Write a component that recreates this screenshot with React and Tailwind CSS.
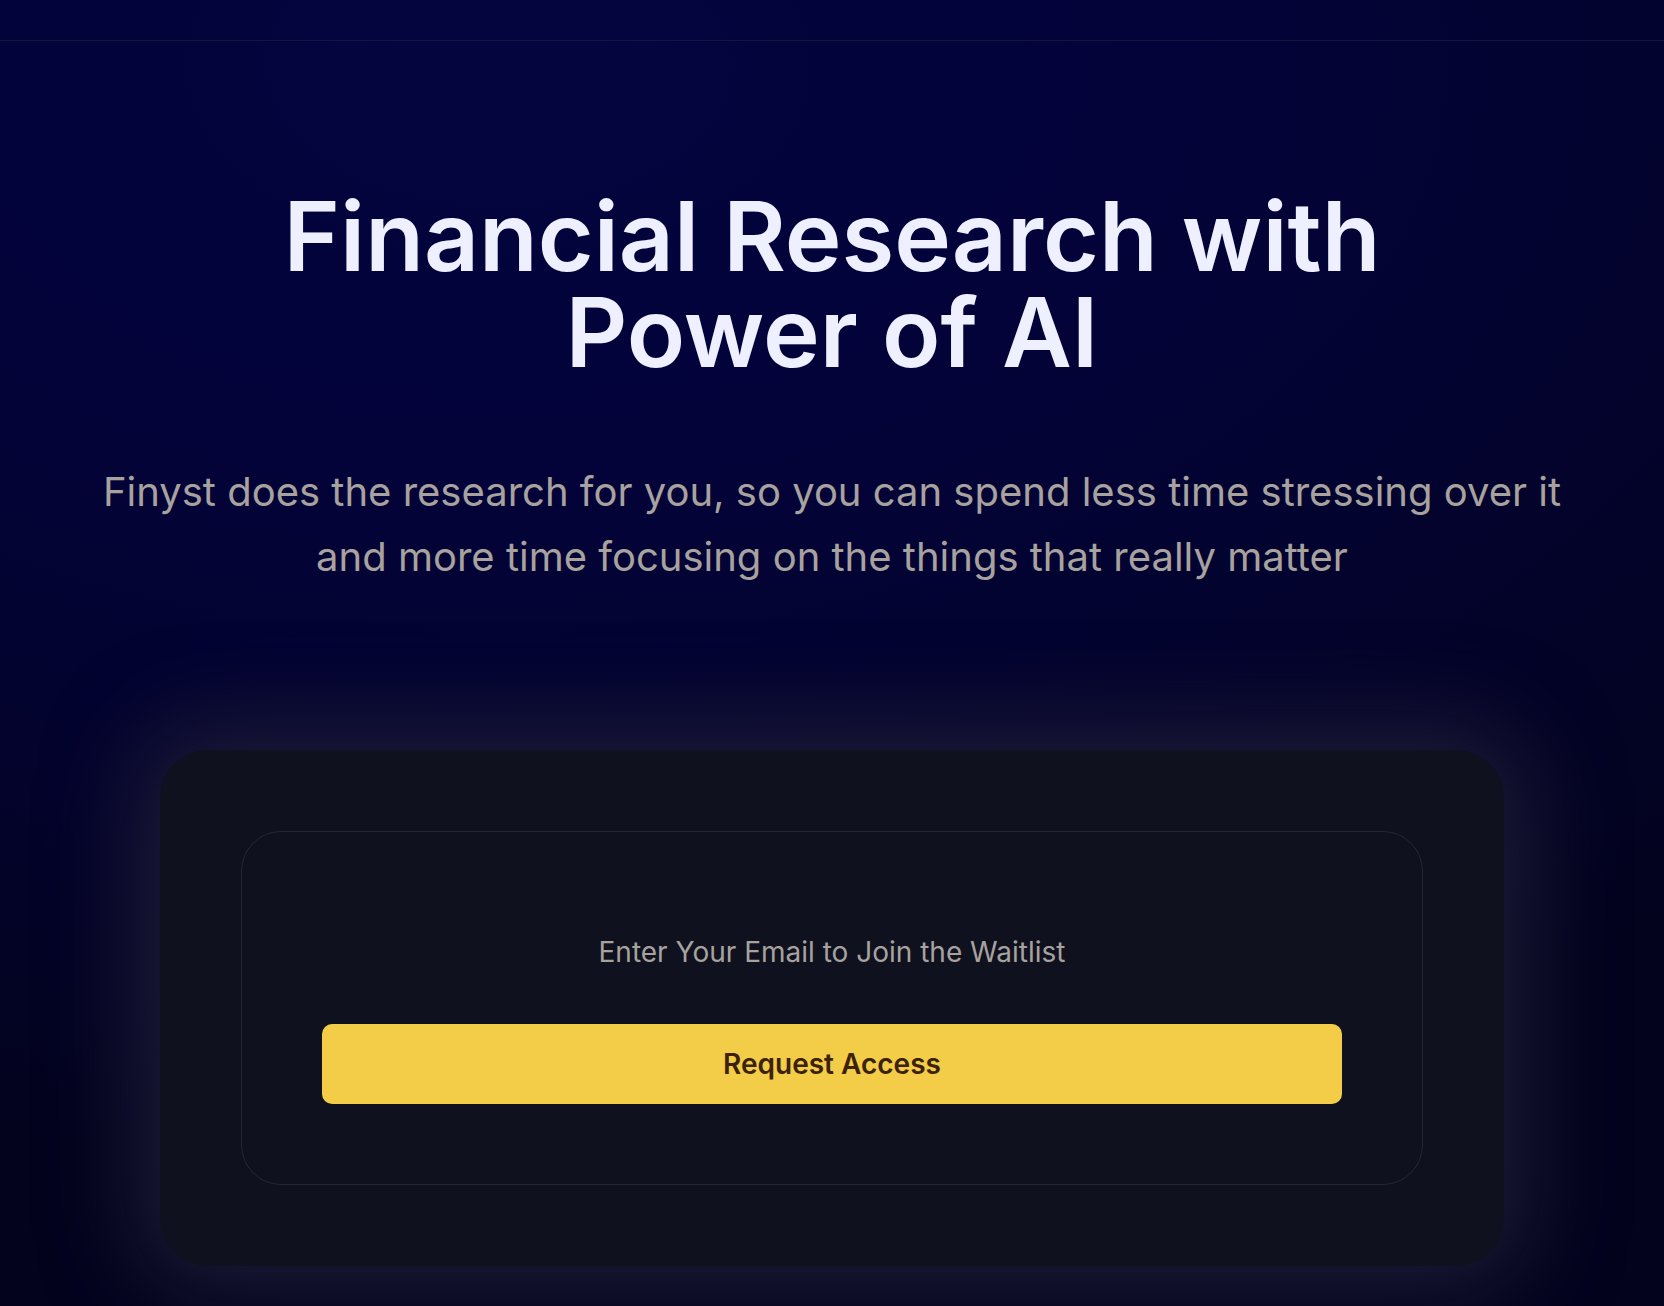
import React from 'react';

function Waitlist() {
  return (
    <div className="mx-auto w-[1344px] rounded-[48px] bg-[#0f111f] p-[81px] shadow-[0_0_90px_22px_#1e1c36]">
      <div className="flex flex-col items-center rounded-[40px] border border-[#222836] px-20 pt-[100px] pb-20">
        <p className="text-[28px] leading-[40px] text-[#a8a29e]">Enter Your Email to Join the Waitlist</p>
        <button className="mt-[52px] h-20 w-full rounded-[10px] bg-[#f3cd48] text-[28px] font-semibold text-[#3b2208]">
          Request Access
        </button>
      </div>
    </div>
  );
}

export default function App() {
  return (
    <div
      className="min-h-[1306px] w-full overflow-hidden bg-[#030320] bg-[radial-gradient(ellipse_110%_85%_at_30%_5%,#04043f_0%,#03033a_35%,#03032e_65%,#03031e_100%)] font-['Inter','Noto_Sans',sans-serif]"
    >
      <header className="h-[41px] border-b border-[#15153f]"></header>

      <main className="flex flex-col items-center px-[82px] pt-[147px] pb-10">
        <h1 className="text-center text-[96px] leading-none font-semibold text-[#eef0ff]">
          Financial Research with
          <br />
          Power of AI
        </h1>
        <p className="mt-[79px] max-w-[1500px] text-center text-[40px] leading-[65px] text-[#a8a29e]">
          Finyst does the research for you, so you can spend less time stressing over it and more time focusing on the things that really matter
        </p>
        <div className="mt-[161px] w-full">
          <Waitlist />
        </div>
      </main>
    </div>
  );
}
